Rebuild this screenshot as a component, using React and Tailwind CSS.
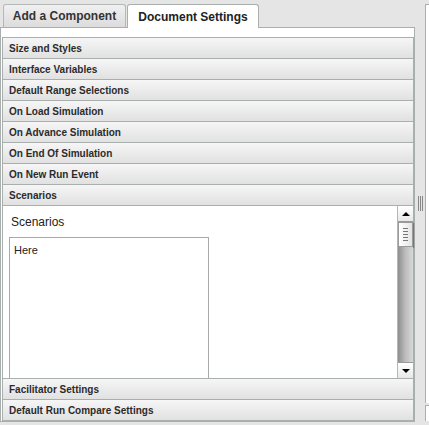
import React from "react";

const sectionsTop = [
  "Size and Styles",
  "Interface Variables",
  "Default Range Selections",
  "On Load Simulation",
  "On Advance Simulation",
  "On End Of Simulation",
  "On New Run Event",
  "Scenarios",
];

const sectionsBottom = ["Facilitator Settings", "Default Run Compare Settings"];

function Header({ title }) {
  return (
    <div className="h-[21px] flex items-center pl-[6px] border-b border-[#a9afad] bg-gradient-to-b from-[#f6f6f6] to-[#e1e1e1] text-[10px] font-bold text-[#2b2b2b]">
      {title}
    </div>
  );
}

function Scrollbar() {
  return (
    <div className="w-[16px] flex flex-col border-l border-[#b5b5b5]">
      <div className="h-[16px] flex items-center justify-center bg-gradient-to-b from-white to-[#e8e8e8] border-b border-[#9a9a9a]">
        <div className="w-0 h-0 border-l-[4px] border-r-[4px] border-b-[4px] border-l-transparent border-r-transparent border-b-black" />
      </div>
      <div className="h-[25px] flex flex-col items-center justify-center gap-[2px] bg-gradient-to-r from-white to-[#e4e4e4] border border-[#9a9a9a] shadow-[1px_1px_1px_#777]">
        <div className="w-[5px] h-px bg-[#777]" />
        <div className="w-[5px] h-px bg-[#777]" />
        <div className="w-[5px] h-px bg-[#777]" />
        <div className="w-[5px] h-px bg-[#777]" />
        <div className="w-[5px] h-px bg-[#777]" />
      </div>
      <div className="flex-1 bg-gradient-to-r from-[#8e8e8e] via-[#bdbdbd] to-[#d8d8d8]" />
      <div className="h-[16px] flex items-center justify-center bg-gradient-to-b from-white to-[#e8e8e8] border-t border-[#9a9a9a]">
        <div className="w-0 h-0 border-l-[4px] border-r-[4px] border-t-[4px] border-l-transparent border-r-transparent border-t-black" />
      </div>
    </div>
  );
}

export default function App() {
  return (
    <div className="w-[429px] h-[425px] flex bg-[#e5e5e5] overflow-hidden font-['Liberation_Sans',Arial,sans-serif]">
      {/* Main column */}
      <div className="w-[415px] flex flex-col">
        {/* Tabs */}
        <div className="flex items-end h-[27px] pl-[3px] gap-px">
          <div className="h-[23px] w-[123px] flex items-center justify-center rounded-t-[3px] border border-b-0 border-[#b4b8b7] bg-gradient-to-b from-[#f0f0f0] to-[#dcdcdc] text-[12px] font-bold text-[#333]">
            Add a Component
          </div>
          <div className="h-[24px] w-[132px] flex items-center justify-center rounded-t-[3px] border border-b-0 border-[#a9afad] bg-white text-[12px] font-bold text-[#222] mb-[-1px] relative z-10">
            Document Settings
          </div>
        </div>

        {/* Panel */}
        <div className="h-[395px] bg-white border border-[#a9afad] pt-[9px] pl-px">
          <div className="border-l border-r border-t border-[#a9afad]">
            {sectionsTop.map((s) => (
              <Header key={s} title={s} />
            ))}
            <div className="h-[173px] flex border-b border-[#a9afad] bg-white">
              <div className="flex-1 pl-[8px] pt-[7px] overflow-hidden">
                <div className="text-[12px] text-[#222]">Scenarios</div>
                <div className="mt-[6px] ml-[-2px] w-[200px] h-[150px] border border-[#a9a9a9] px-[4px] pt-[4px] text-[11px] text-[#222]">
                  Here
                </div>
              </div>
              <Scrollbar />
            </div>
            {sectionsBottom.map((s) => (
              <Header key={s} title={s} />
            ))}
          </div>
        </div>
      </div>

      {/* Splitter */}
      <div className="w-[10px] flex items-center justify-center pb-[18px]">
        <div className="flex gap-px">
          <div className="w-px h-[15px] bg-[#888]" />
          <div className="w-px h-[15px] bg-[#888]" />
          <div className="w-px h-[15px] bg-[#888]" />
        </div>
      </div>

      {/* Right panel edge */}
      <div className="flex-1 flex flex-col pt-[4px] pb-[4px] gap-[2px]">
        <div className="flex-1 bg-white border-l border-t border-[#a9afad]" />
        <div className="h-[16px] bg-white border-l border-t border-[#a9afad]" />
      </div>
    </div>
  );
}
